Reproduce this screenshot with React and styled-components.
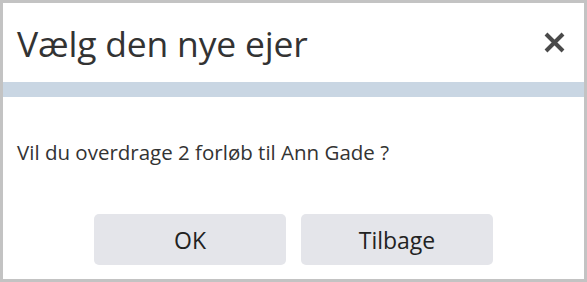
import React from 'react'
import styled, { createGlobalStyle } from 'styled-components'

const Global = createGlobalStyle`
html, body {
    margin: 0;
    padding: 0;
    background: #ffffff;
}
`

const Dialog = styled.div`
width: 587px;
height: 282px;
box-sizing: border-box;
border: 3px solid #c3c3c3;
background: #ffffff;
display: grid;
grid-template-rows: 79px 15px 1fr auto;
font-family: "Open Sans", "Noto Sans", sans-serif;
color: #333333;
`

const Header = styled.div`
display: flex;
align-items: center;
justify-content: space-between;
padding: 0 18px 0 14px;

h1{
    margin: 0;
    font-size: 35.5px;
    font-weight: 400;
    color: #333333;
    letter-spacing: -0.2px;
}
`

const CloseButton = styled.button`
background: transparent;
border: 0;
padding: 0;
width: 24px;
height: 24px;
display: grid;
place-items: center;
cursor: pointer;
`

const Band = styled.div`
background: #c9d6e3;
`

const Body = styled.div`
display: flex;
align-items: center;
padding: 0 14px 8px;

p{
    margin: 0;
    font-size: 20.5px;
    color: #333333;
}
`

const Footer = styled.div`
display: flex;
justify-content: center;
gap: 15px;
padding-bottom: 14px;
`

const Button = styled.button`
width: 192px;
height: 51px;
border: 0;
border-radius: 5px;
background: #e4e5ea;
font-family: "Open Sans", "Noto Sans", sans-serif;
font-size: 23px;
color: #222222;
cursor: pointer;
`

export default function App() {
    return (
        <>
            <Global />
            <Dialog>
                <Header>
                    <h1>{'Vælg den nye ejer'}</h1>
                    <CloseButton aria-label="Luk">
                        <svg width="21" height="21" viewBox="0 0 21 21">
                            <path d="M2 2 L19 19 M19 2 L2 19" stroke="#4a4a4a" strokeWidth="4" strokeLinecap="butt" />
                        </svg>
                    </CloseButton>
                </Header>
                <Band />
                <Body>
                    <p>{'Vil du overdrage 2 forløb til Ann Gade ?'}</p>
                </Body>
                <Footer>
                    <Button>OK</Button>
                    <Button>Tilbage</Button>
                </Footer>
            </Dialog>
        </>
    )
}
